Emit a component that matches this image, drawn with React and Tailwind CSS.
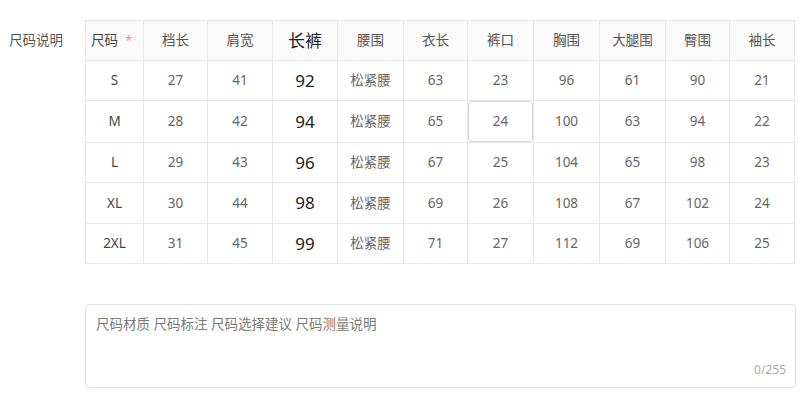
import React from "react";

const font = { fontFamily: '"Noto Sans", "Noto Sans CJK SC", sans-serif' };

const headers = ["档长", "肩宽", "长裤", "腰围", "衣长", "裤口", "胸围", "大腿围", "臀围", "袖长"];
const widths = [58, 64, 65, 65, 66, 64, 66, 66, 66, 64, 65];
const rows = [
  ["S", "27", "41", "92", "松紧腰", "63", "23", "96", "61", "90", "21"],
  ["M", "28", "42", "94", "松紧腰", "65", "24", "100", "63", "94", "22"],
  ["L", "29", "43", "96", "松紧腰", "67", "25", "104", "65", "98", "23"],
  ["XL", "30", "44", "98", "松紧腰", "69", "26", "108", "67", "102", "24"],
  ["2XL", "31", "45", "99", "松紧腰", "71", "27", "112", "69", "106", "25"],
];
const heights = [40, 41, 40, 41, 40];

export default function App() {
  return (
    <div className="w-[800px] h-[393px] bg-white overflow-hidden" style={font}>
      <div className="flex pt-[20px]">
        <div className="w-[85px] shrink-0 pl-[9px] h-[40px] flex items-center text-[13.5px] text-[#555]">
          尺码说明
        </div>
        <div className="flex flex-col">
          <table className="border-collapse table-fixed w-[710px]">
            <colgroup>
              {widths.map((w, i) => (
                <col key={i} style={{ width: w }} />
              ))}
            </colgroup>
            <thead>
              <tr className="h-[40px] bg-[#fafafa]">
                <th className="border border-[#e6e6e6] text-left pl-[5px] font-normal text-[13.5px] text-[#444]">
                  尺码 <span className="text-[#f08a9a] ml-[4px] text-[12px]">*</span>
                </th>
                {headers.map((h, i) => (
                  <th
                    key={i}
                    className={
                      "border border-[#e6e6e6] text-center font-normal " +
                      (i === 2 ? "text-[17px] text-[#222]" : "text-[13.5px] text-[#555]")
                    }
                  >
                    {h}
                  </th>
                ))}
              </tr>
            </thead>
            <tbody>
              {rows.map((r, ri) => (
                <tr key={ri} style={{ height: heights[ri] }}>
                  {r.map((c, ci) => (
                    <td
                      key={ci}
                      className={
                        "border border-[#e6e6e6] text-center p-0 " +
                        (ci === 3
                          ? "text-[17px] text-[#222]"
                          : ci === 0
                          ? "text-[13.5px] text-[#444]"
                          : "text-[13.5px] text-[#666]")
                      }
                    >
                      {ri === 1 && ci === 6 ? (
                        <div className="h-[41px] flex items-center justify-center border border-[#d4d8de] rounded-[4px]">
                          {c}
                        </div>
                      ) : (
                        c
                      )}
                    </td>
                  ))}
                </tr>
              ))}
            </tbody>
          </table>
          <div className="mt-[40px] w-[711px] h-[84px] border border-[#dcdfe6] rounded-[4px] relative">
            <div className="pl-[10px] pt-[9px] text-[13.5px] text-[#7a7a7a]">
              尺码材质 尺码标注 尺码选择建议 尺码测量说明
            </div>
            <div className="absolute right-[9px] bottom-[8px] text-[12px] text-[#aaa]">0/255</div>
          </div>
        </div>
      </div>
    </div>
  );
}
